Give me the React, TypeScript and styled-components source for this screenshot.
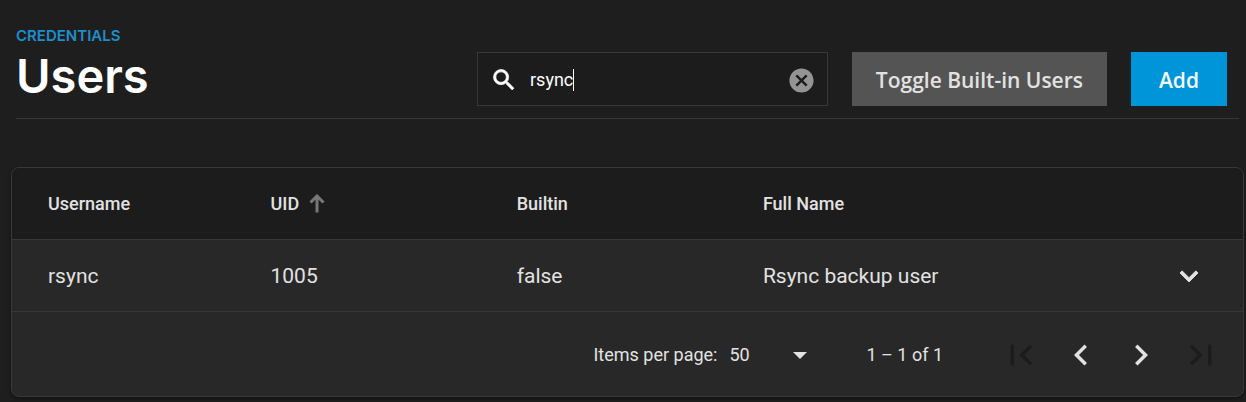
import React, { useState } from "react";
import styled, { createGlobalStyle } from "styled-components";

const color = {
  page: "#1e1e1e",
  dark: "#1c1c1c",
  card: "#282828",
  line: "#383838",
  text: "#e2e2e2",
  primary: "#0095d9",
};

const GlobalStyle = createGlobalStyle`
  *, *::before, *::after { box-sizing: border-box; }
  body {
    margin: 0;
    background: ${color.page};
    color: ${color.text};
    font-family: Roboto, sans-serif;
  }
  button, input, select { font: inherit; color: inherit; }
`;

const Page = styled.div`
  padding: 28px 2px 5px 11px;
`;

const Header = styled.header`
  display: flex;
  align-items: flex-start;
  justify-content: space-between;
  gap: 24px;
  margin: 0 5px 48px 5px;
  padding-right: 12px;
  border-bottom: 1px solid ${color.line};
`;

const Heading = styled.div`
  display: flex;
  flex-direction: column;
`;

const Breadcrumb = styled.a`
  color: #1d8ecb;
  font: 600 15px/16px Inter, sans-serif;
  text-decoration: none;
  text-transform: uppercase;
`;

const Title = styled.h1`
  margin: 8px 0 0;
  color: #fff;
  font: 600 47px/48px Inter, sans-serif;
`;

const Actions = styled.div`
  display: flex;
  flex: 0 1 750px;
  gap: 24px;
  padding: 24px 0 12px;
`;

const SearchBox = styled.div`
  display: flex;
  flex: 1;
  align-items: center;
  min-width: 0;
  height: 54px;
  padding: 2px 10px 0 12px;
  background: ${color.dark};
  border: 1px solid ${color.line};
  color: #fff;
`;

const SearchLabel = styled.label`
  display: flex;
  flex: 1;
  align-items: center;
  min-width: 0;
`;

const SearchInput = styled.input`
  field-sizing: content;
  min-width: 1px;
  margin-left: 12px;
  padding: 0;
  background: none;
  border: 0;
  outline: 0;
  font-size: 18px;
  line-height: 24px;
  caret-color: transparent;
`;

const Caret = styled.span`
  width: 1px;
  height: 22px;
  background: #fff;
`;

const IconButton = styled.button<{ $tone?: string; $size?: number }>`
  display: grid;
  place-items: center;
  width: ${(p) => p.$size ?? 60}px;
  height: ${(p) => p.$size ?? 60}px;
  padding: 0;
  background: none;
  border: 0;
  color: ${(p) => p.$tone ?? color.text};
  cursor: pointer;
  &:disabled { color: #1c1c1c; cursor: default; }
`;

const Button = styled.button<{ $primary?: boolean }>`
  height: 54px;
  padding: 2px 24px 0;
  min-width: 96px;
  background: ${(p) => (p.$primary ? color.primary : "#545454")};
  border: 0;
  color: ${(p) => (p.$primary ? "#f4faff" : color.text)};
  font: 600 21px/24px "Open Sans", sans-serif;
  white-space: nowrap;
  cursor: pointer;
`;

const Card = styled.section`
  overflow: hidden;
  background: ${color.card};
  border: 1px solid ${color.line};
  border-radius: 8px;
  box-shadow: 0 2px 4px rgba(0, 0, 0, 0.4);
`;

const Table = styled.table`
  width: 100%;
  border-collapse: separate;
  border-spacing: 0;
  table-layout: fixed;
`;

const HeadCell = styled.th<{ $width?: string }>`
  width: ${(p) => p.$width ?? "auto"};
  height: 72px;
  padding: 0;
  background: ${color.dark};
  border-bottom: 1px solid ${color.line};
  font-size: 18px;
  font-weight: 500;
  line-height: 24px;
  text-align: left;
  &:first-child { padding-left: 36px; }
`;

const SortButton = styled.button`
  display: flex;
  align-items: center;
  gap: 8px;
  padding: 0;
  background: none;
  border: 0;
  cursor: pointer;
`;

const Cell = styled.td`
  height: 72px;
  padding: 0;
  border-bottom: 1px solid ${color.line};
  font-size: 21px;
  line-height: 24px;
  &:first-child { padding-left: 36px; }
  &:last-child { padding-right: 36px; }
`;

const RowEnd = styled.div`
  display: flex;
  align-items: center;
  justify-content: space-between;
`;

const Paginator = styled.footer`
  display: flex;
  align-items: center;
  justify-content: flex-end;
  height: 84px;
  padding: 2px 12px 0 0;
  font-size: 18px;
  line-height: 24px;
`;

const SelectWrap = styled.div`
  display: flex;
  align-items: center;
  margin: 0 59px 0 12px;
`;

const PageSelect = styled.select`
  width: 80px;
  margin-right: -16px;
  padding: 0 16px 0 0;
  appearance: none;
  background: none;
  border: 0;
  outline: 0;
`;

const Range = styled.span`
  margin-right: 48px;
`;

const Nav = styled.nav`
  display: flex;
`;

const paths = {
  search:
    "M9.5,3A6.5,6.5 0 0,1 16,9.5C16,11.11 15.41,12.59 14.44,13.73L14.71,14H15.5L20.5,19L19,20.5L14,15.5V14.71L13.73,14.44C12.59,15.41 11.11,16 9.5,16A6.5,6.5 0 0,1 3,9.5A6.5,6.5 0 0,1 9.5,3M9.5,5C7,5 5,7 5,9.5C5,12 7,14 9.5,14C12,14 14,12 14,9.5C14,7 12,5 9.5,5Z",
  clear:
    "M12,2C17.53,2 22,6.47 22,12C22,17.53 17.53,22 12,22C6.47,22 2,17.53 2,12C2,6.47 6.47,2 12,2M15.59,7L12,10.59L8.41,7L7,8.41L10.59,12L7,15.59L8.41,17L12,13.41L15.59,17L17,15.59L13.41,12L17,8.41L15.59,7Z",
  down: "M7.41,8.58L12,13.17L16.59,8.58L18,10L12,16L6,10L7.41,8.58Z",
  first: "M18.41 16.59L13.82 12l4.59-4.59L17 6l-6 6 6 6zM6 6h2v12H6z",
  prev: "M15.41 7.41L14 6l-6 6 6 6 1.41-1.41L10.83 12z",
  next: "M10 6L8.59 7.41 13.17 12l-4.58 4.59L10 18l6-6z",
  last: "M5.59 7.41L10.18 12l-4.59 4.59L7 18l6-6-6-6zM16 6h2v12h-2z",
};

function Icon({ name, size, bold }: { name: keyof typeof paths; size: number; bold?: boolean }) {
  return (
    <svg width={size} height={size} viewBox="0 0 24 24" fill="currentColor" aria-hidden="true">
      <path d={paths[name]} stroke="currentColor" strokeWidth={bold ? 0.6 : 0} />
    </svg>
  );
}

const users = [{ username: "rsync", uid: 1005, builtin: "false", fullName: "Rsync backup user" }];

export default function App() {
  const [query, setQuery] = useState("rsync");
  return (
    <>
      <GlobalStyle />
      <Page>
        <Header>
          <Heading>
            <Breadcrumb href="#credentials">Credentials</Breadcrumb>
            <Title>Users</Title>
          </Heading>
          <Actions>
            <SearchBox>
              <SearchLabel>
                <Icon name="search" size={28} bold />
                <SearchInput
                  type="text"
                  aria-label="Search users"
                  value={query}
                  onChange={(e) => setQuery(e.target.value)}
                />
                <Caret />
              </SearchLabel>
              <IconButton $size={30} $tone="#949494" aria-label="Clear search" onClick={() => setQuery("")}>
                <Icon name="clear" size={29} />
              </IconButton>
            </SearchBox>
            <Button>Toggle Built-in Users</Button>
            <Button $primary>Add</Button>
          </Actions>
        </Header>
        <Card>
          <Table>
            <thead>
              <tr>
                <HeadCell $width="21%">Username</HeadCell>
                <HeadCell $width="20%" aria-sort="ascending">
                  <SortButton>
                    UID
                    <svg width="20" height="20" viewBox="0 0 20 20" fill="none" stroke="#777" strokeWidth="3" aria-hidden="true">
                      <path d="M10 18.5V2.5M3.5 8.5L10 2L16.5 8.5" />
                    </svg>
                  </SortButton>
                </HeadCell>
                <HeadCell $width="20%">Builtin</HeadCell>
                <HeadCell>Full Name</HeadCell>
              </tr>
            </thead>
            <tbody>
              {users.map((u) => (
                <tr key={u.uid}>
                  <Cell>{u.username}</Cell>
                  <Cell>{u.uid}</Cell>
                  <Cell>{u.builtin}</Cell>
                  <Cell>
                    <RowEnd>
                      {u.fullName}
                      <IconButton $size={36} aria-label="Expand row">
                        <Icon name="down" size={36} bold />
                      </IconButton>
                    </RowEnd>
                  </Cell>
                </tr>
              ))}
            </tbody>
          </Table>
          <Paginator>
            <label htmlFor="page-size">Items per page:</label>
            <SelectWrap>
              <PageSelect id="page-size" defaultValue="50">
                <option>10</option>
                <option>50</option>
                <option>100</option>
              </PageSelect>
              <svg width="14" height="7" viewBox="0 0 14 7" fill={color.text} aria-hidden="true">
                <path d="M0 0H14L7 7Z" />
              </svg>
            </SelectWrap>
            <Range>1 – 1 of 1</Range>
            <Nav aria-label="Pagination">
              <IconButton disabled aria-label="First page"><Icon name="first" size={42} /></IconButton>
              <IconButton aria-label="Previous page"><Icon name="prev" size={42} /></IconButton>
              <IconButton aria-label="Next page"><Icon name="next" size={42} /></IconButton>
              <IconButton disabled aria-label="Last page"><Icon name="last" size={42} /></IconButton>
            </Nav>
          </Paginator>
        </Card>
      </Page>
    </>
  );
}
